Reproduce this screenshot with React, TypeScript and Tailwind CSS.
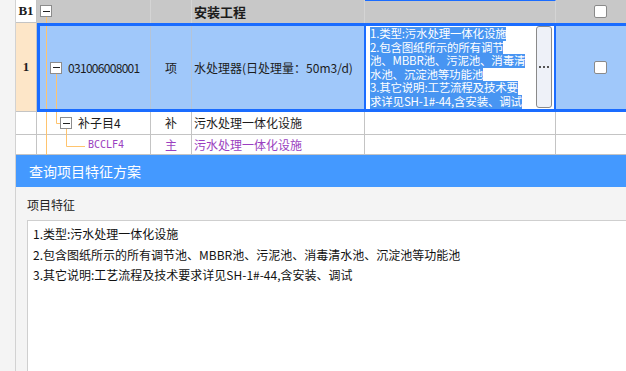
import React from "react";

const featureLines = [
  "1.类型:污水处理一体化设施",
  "2.包含图纸所示的所有调节",
  "池、MBBR池、污泥池、消毒清",
  "水池、沉淀池等功能池",
  "3.其它说明:工艺流程及技术要",
  "求详见SH-1#-44,含安装、调试",
];

const dialogLines = [
  "1.类型:污水处理一体化设施",
  "2.包含图纸所示的所有调节池、MBBR池、污泥池、消毒清水池、沉淀池等功能池",
  "3.其它说明:工艺流程及技术要求详见SH-1#-44,含安装、调试",
];

function MinusBox() {
  return (
    <span className="w-[12px] h-[12px] shrink-0 border border-[#8c8c8c] bg-white flex items-center justify-center">
      <span className="w-[7px] h-[1px] bg-[#222]"></span>
    </span>
  );
}

function CheckBox() {
  return <span className="block w-[13px] h-[13px] bg-white border border-[#8a8a8a] rounded-[2px]"></span>;
}

export default function App() {
  const cjk = { fontFamily: '"Noto Sans CJK SC", "Noto Sans", sans-serif' };
  return (
    <div className="relative w-[626px] h-[371px] overflow-hidden flex bg-[#f4f4f4] text-[#1c1c1c]" style={cjk}>
      {/* left strip */}
      <div className="w-[16px] shrink-0 border-r border-[#d2d2d2] bg-[#f4f4f4]"></div>

      <div className="flex-1 min-w-0 flex flex-col">
        {/* header row */}
        <div className="flex h-[23px] bg-[#c8c8c8] text-[12px]">
          <div className="w-[21px] shrink-0 bg-white border-r border-b border-[#c4c4c4] flex items-center justify-center font-bold text-[13px]" style={{ fontFamily: '"Liberation Serif", serif' }}>
            B1
          </div>
          <div className="w-[114px] shrink-0 border-r border-[#d4d4d4] flex items-center pl-[3px] pb-[1px]">
            <MinusBox />
          </div>
          <div className="w-[41px] shrink-0 border-r border-[#d4d4d4]"></div>
          <div className="w-[173px] shrink-0 border-r border-[#d4d4d4] flex items-center pl-[2px] font-bold text-[13px]">
            安装工程
          </div>
          <div className="w-[191px] shrink-0 border-r border-[#d4d4d4] border-t border-t-[#1a6cff]"></div>
          <div className="flex-1 flex items-center pl-[38px]">
            <CheckBox />
          </div>
        </div>

        {/* selected row */}
        <div className="flex h-[89px] text-[12px]">
          <div className="w-[21px] shrink-0 bg-[#fde6c8] border-r border-b border-[#c4c4c4] flex items-center justify-center font-bold text-[13px]" style={{ fontFamily: '"Liberation Serif", serif' }}>
            1
          </div>
          <div className="flex-1 flex border-[3px] border-r-0 border-[#1a6cff] bg-[#a0c8fa]">
            <div className="w-[111px] shrink-0 border-r border-[#b4c4d8] flex items-center pl-[10px] gap-[6px]">
              <MinusBox />
              <span className="tracking-[-0.7px]">031006008001</span>
            </div>
            <div className="w-[41px] shrink-0 border-r border-[#b4c4d8] flex items-center justify-center">项</div>
            <div className="w-[172px] shrink-0 flex items-center pl-[2px]">水处理器(日处理量：50m3/d)</div>
            <div className="w-[192px] shrink-0 bg-white border-x-2 border-[#1a6cff] flex">
              <div className="flex-1 min-w-0 overflow-hidden pl-[4px] pt-[1px] text-[11.5px] tracking-[-0.2px] text-white">
                {featureLines.map((l, i) => (
                  <div key={i} className="h-[13.6px] leading-[13.6px]">
                    <span className="inline-block h-[13.6px] leading-[13.6px] bg-[#4895f2] whitespace-nowrap">{l}</span>
                  </div>
                ))}
              </div>
              <div className="w-[16px] shrink-0 ml-[3px] mr-[2px] mb-[1px] rounded-[3px] border border-[#8a8a8a] bg-[#eef1f8] flex items-center justify-center gap-[2px]">
                <span className="w-[2px] h-[2px] bg-[#555]"></span>
                <span className="w-[2px] h-[2px] bg-[#555]"></span>
                <span className="w-[2px] h-[2px] bg-[#555]"></span>
              </div>
            </div>
            <div className="flex-1 flex items-center pl-[38px]">
              <CheckBox />
            </div>
          </div>
        </div>

        {/* 补子目 row */}
        <div className="flex h-[23px] bg-white text-[12px]">
          <div className="w-[21px] shrink-0 border-r border-b border-[#c4c4c4]"></div>
          <div className="w-[114px] shrink-0 border-r border-b border-[#c4c4c4] flex items-center pl-[23px] gap-[6px]">
            <MinusBox />
            <span>补子目4</span>
          </div>
          <div className="w-[41px] shrink-0 border-r border-b border-[#c4c4c4] flex items-center justify-center">补</div>
          <div className="w-[173px] shrink-0 border-r border-b border-[#c4c4c4] flex items-center pl-[2px]">污水处理一体化设施</div>
          <div className="w-[191px] shrink-0 border-r border-b border-[#c4c4c4]"></div>
          <div className="flex-1 border-b border-[#c4c4c4]"></div>
        </div>

        {/* BCCLF row */}
        <div className="flex h-[20px] bg-white text-[12px] text-[#9b3fc0]">
          <div className="w-[21px] shrink-0 border-r border-b border-[#c4c4c4]"></div>
          <div className="w-[114px] shrink-0 border-r border-b border-[#c4c4c4] flex items-center pl-[51px] text-[10px]" style={{ fontFamily: '"DejaVu Sans Mono", monospace' }}>
            BCCLF4
          </div>
          <div className="w-[41px] shrink-0 border-r border-b border-[#c4c4c4] flex items-center justify-center">主</div>
          <div className="w-[173px] shrink-0 border-r border-b border-[#c4c4c4] flex items-center pl-[2px]">污水处理一体化设施</div>
          <div className="w-[191px] shrink-0 border-r border-b border-[#c4c4c4]"></div>
          <div className="flex-1 border-b border-[#c4c4c4]"></div>
        </div>

        {/* dialog */}
        <div className="flex-1 flex flex-col bg-[#f4f4f4]">
          <div className="h-[32px] shrink-0 bg-[#4499ff] text-white text-[14px] flex items-center pl-[13px]">
            查询项目特征方案
          </div>
          <div className="flex-1 flex flex-col pl-[11px]">
            <div className="pt-[8px] h-[33px] text-[12px] leading-[20px] text-[#222]">项目特征</div>
            <div className="flex-1 bg-white border-l border-t border-[#cfcfcf] pl-[5px] pt-[3px] text-[12px] leading-[20.5px] text-[#111]">
              {dialogLines.map((l, i) => (
                <div key={i} className="whitespace-nowrap">{l}</div>
              ))}
            </div>
          </div>
        </div>
      </div>

      {/* tree connector lines */}
      <svg className="absolute left-0 top-0 pointer-events-none" width="626" height="155">
        <g stroke="#ffc46e" strokeWidth="1" fill="none">
          <path d="M46.5 17V23 M46.5 26V109 M46.5 112V155" />
          <path d="M56.5 74V109 M56.5 112V123.5H60" />
          <path d="M66.5 129V146.5H85" />
        </g>
      </svg>
    </div>
  );
}
